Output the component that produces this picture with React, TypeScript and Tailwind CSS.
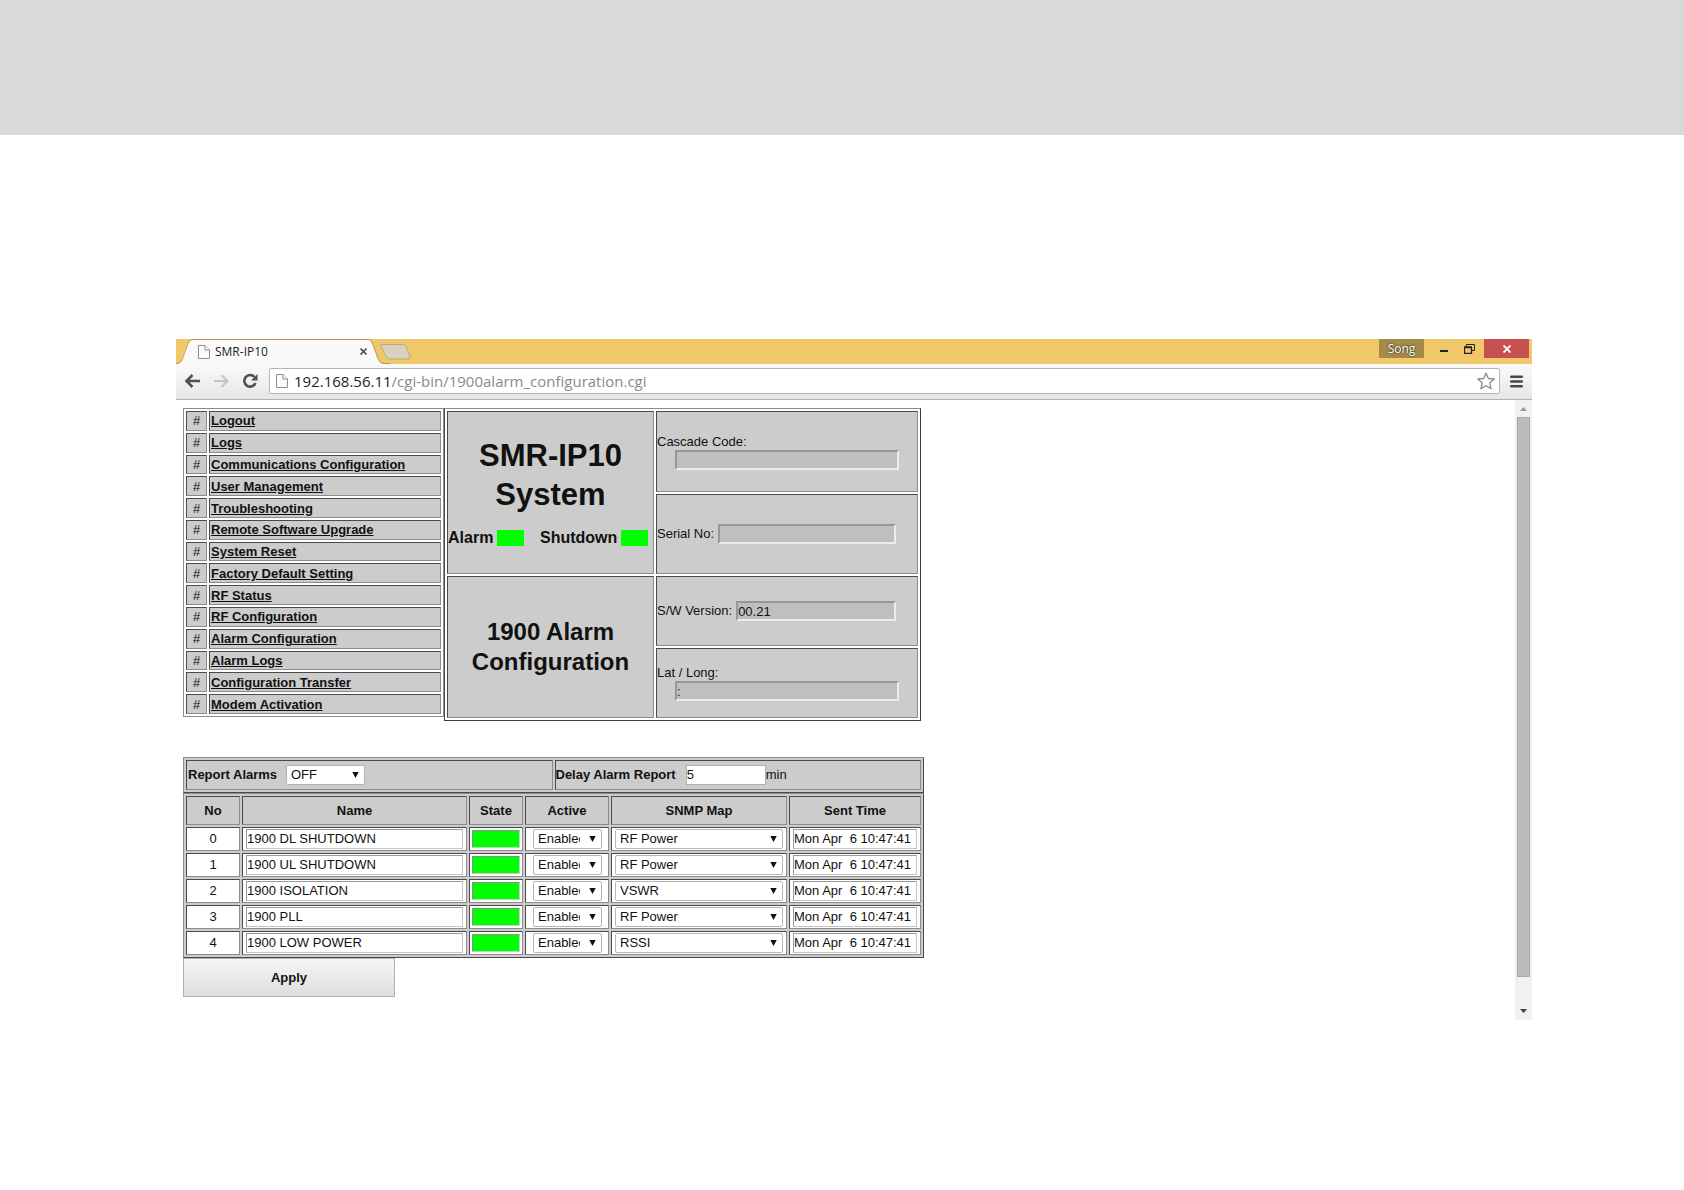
import React from "react";

const menu = [
  "Logout",
  "Logs",
  "Communications Configuration",
  "User Management",
  "Troubleshooting",
  "Remote Software Upgrade",
  "System Reset",
  "Factory Default Setting",
  "RF Status",
  "RF Configuration",
  "Alarm Configuration",
  "Alarm Logs",
  "Configuration Transfer",
  "Modem Activation",
];

const alarms = [
  { name: "1900 DL SHUTDOWN", map: "RF Power" },
  { name: "1900 UL SHUTDOWN", map: "RF Power" },
  { name: "1900 ISOLATION", map: "VSWR" },
  { name: "1900 PLL", map: "RF Power" },
  { name: "1900 LOW POWER", map: "RSSI" },
];

const snmpOptions = ["RF Power", "VSWR", "RSSI"];

const cell = "border border-t-[#4a4a4a] border-l-[#4a4a4a] border-r-[#8c8c8c] border-b-[#8c8c8c]";
const greyField =
  "h-5 border-2 border-t-[#979797] border-l-[#979797] border-r-[#ececec] border-b-[#ececec] bg-[#bfbfbf] text-[13px] leading-4 outline-none";
const whiteField =
  "block h-5 w-full border border-t-[#9a9a9a] border-l-[#9a9a9a] border-r-[#c4c4c4] border-b-[#c4c4c4] bg-white pb-0.5 text-[13px] leading-4 outline-none";

function PageIcon() {
  return (
    <svg width="12" height="14" viewBox="0 0 12 14" fill="#fbfbfb" stroke="#8f8f8f" aria-hidden="true">
      <path d="M.5.5h6.500l4.500 4.500v8.500H.5z" />
      <path d="M7 .5v4.500h4.500" />
    </svg>
  );
}

function Select({ label, value, options, size, text }: { label: string; value: string; options: string[]; size: string; text: string }) {
  return (
    <span className={`relative ${size}`}>
      <select
        aria-label={label}
        defaultValue={value}
        className={`block h-5 w-full appearance-none rounded-xs border border-[#b4b4b4] bg-white pl-1 text-[13px] leading-4 outline-none ${text}`}
      >
        {options.map((o) => (
          <option key={o}>{o}</option>
        ))}
      </select>
      <svg className="pointer-events-none absolute top-[7px] right-1.5" width="7" height="6" viewBox="0 0 7 6" aria-hidden="true">
        <path d="M.3 0h6.400L3.500 6z" fill="#111" />
      </svg>
    </span>
  );
}

function TitleBar() {
  return (
    <div className="relative flex h-[25px] items-start bg-[#f0c869]">
      <svg className="absolute top-0 left-0" width="240" height="25" viewBox="0 0 240 25" aria-hidden="true">
        <path d="M0 24.500H1q4 0 6-5L13 3q1-2.500 3-2.500H192q3 0 4 2.500l6 16.500q2 5 6 5h6" fill="none" stroke="#b79a58" />
        <path d="M1 25q4 0 6-5L13 3.500Q14.500 1 16.500 1H192q2.500 0 3.500 2.500L201.500 20q2 5 6 5z" fill="#fafafa" />
        <path d="M206 5.500h21q2 0 3 2l4 10q1 2.500-2 2.500h-18q-3 0-4-2.500l-5-10q-1-2 1-2z" fill="#d6d2bd" stroke="#b9a878" />
      </svg>
      <div className="relative flex h-[25px] w-[191px] items-center pl-[22px]">
        <PageIcon />
        <span className="ml-[5px] flex-1 font-[Open_Sans,sans-serif] text-xs text-[#222]">SMR-IP10</span>
        <button aria-label="Close tab">
          <svg width="7" height="7" viewBox="0 0 7 7" stroke="#555" strokeWidth="1.600">
            <path d="M.5.5l6 6M6.500.5l-6 6" />
          </svg>
        </button>
      </div>
      <div className="ml-auto flex h-[19px] pr-[3px]">
        <button className="h-[19px] w-[45px] bg-[#a58a4a] font-[Open_Sans,sans-serif] text-xs leading-[18px] text-white [text-shadow:0_0_2px_#000]">
          Song
        </button>
        <button aria-label="Minimize" className="flex w-10 items-center justify-center">
          <svg width="8" height="11" viewBox="0 0 8 11">
            <path d="M0 8h8" stroke="#222" strokeWidth="2" />
          </svg>
        </button>
        <button aria-label="Restore" className="flex w-5 items-center">
          <svg width="11" height="10" viewBox="0 0 11 10" fill="none" stroke="#222">
            <path d="M2.500 2V.5h8v6H8" />
            <path d="M.5 3.500h7v6h-7zM0 3h8" strokeWidth="1.300" />
          </svg>
        </button>
        <button aria-label="Close window" className="flex w-[45px] items-center justify-center bg-[#c75050]">
          <svg width="8" height="8" viewBox="0 0 8 8" stroke="#fff" strokeWidth="1.800">
            <path d="M.5.5l7 7M7.500.5l-7 7" />
          </svg>
        </button>
      </div>
    </div>
  );
}

function Toolbar() {
  return (
    <div className="flex h-9 items-start border-b border-[#b3b3b3] bg-linear-to-b from-[#fafafa] to-[#e6e6e6] pt-1 pr-[9px] pl-2">
      <div className="flex h-[26px] items-center">
        <button aria-label="Back" className="w-[29px]">
          <svg width="17" height="14" viewBox="0 0 17 14" fill="none" stroke="#505050" strokeWidth="2.600">
            <path d="M16 7H3M8.500 1L2.500 7l6 6" />
          </svg>
        </button>
        <button aria-label="Forward" className="w-[29px]">
          <svg width="17" height="14" viewBox="0 0 17 14" fill="none" stroke="#c4c4c4" strokeWidth="2">
            <path d="M1 7h13M8.500 1l6 6-6 6" />
          </svg>
        </button>
        <button aria-label="Reload" className="w-[27px]">
          <svg width="17" height="16" viewBox="0 0 17 16">
            <path d="M12.500 4A5.800 5.800 0 1 0 13.500 10" fill="none" stroke="#505050" strokeWidth="2.600" />
            <path d="M15.500 1v6.500H9z" fill="#505050" />
          </svg>
        </button>
      </div>
      <div className="flex h-[26px] flex-1 items-center rounded-xs border border-[#b5b5b5] bg-white pr-1 pl-1.5">
        <PageIcon />
        <a href="#address" className="ml-1.5 flex-1 font-[Open_Sans,sans-serif] text-[15px] leading-5 text-[#8a8a8a]">
          <span className="text-[#222]">192.168.56.11</span>/cgi-bin/1900alarm_configuration.cgi
        </a>
        <button aria-label="Bookmark">
          <svg width="18" height="18" viewBox="0 0 18 18" fill="#fff" stroke="#8c8c8c" strokeWidth="1.300" strokeLinejoin="round">
            <path d="M9 1l2.300 5.500 5.900.500-4.500 3.900 1.400 5.900L9 13.700l-5.100 3.100 1.400-5.900L.8 7l5.900-.5z" />
          </svg>
        </button>
      </div>
      <button aria-label="Menu" className="ml-2.5 flex h-[26px] items-center">
        <svg width="13" height="13" viewBox="0 0 13 13" stroke="#484848" strokeWidth="2.600" strokeLinecap="round">
          <path d="M1.300 1.800h10.400M1.300 6.500h10.400M1.300 11.200h10.400" />
        </svg>
      </button>
    </div>
  );
}

function MenuTable() {
  return (
    <table className="h-[309px] w-[261px] border-separate border-spacing-[2px] border border-[#8c8c8c] text-[13px] leading-[15px]">
      <tbody>
        {menu.map((item) => (
          <tr key={item} className="bg-[#ccc]">
            <td className={`w-[21px] text-center ${cell}`}>#</td>
            <td className={`pl-px ${cell}`}>
              <a href="#menu" className="font-bold underline">
                {item}
              </a>
            </td>
          </tr>
        ))}
      </tbody>
    </table>
  );
}

function InfoTable() {
  return (
    <table className="w-[477px] table-fixed border-separate border-spacing-[2px] border border-t-[#8c8c8c] border-l-[#4a4a4a] border-r-[#3c3c3c] border-b-[#3c3c3c] text-[13px] leading-4">
      <colgroup>
        <col className="w-[207px]" />
        <col />
      </colgroup>
      <tbody className="[&_td]:bg-[#ccc]">
        <tr className="h-[81px]">
          <td rowSpan={2} className={cell}>
            <h1 className="text-center text-[31px] leading-[39px] font-bold">
              SMR-IP10
              <br />
              System
            </h1>
            <div className="mt-3.5 flex items-center pb-0.5 text-base leading-5 font-bold">
              <span className="w-[49px]">Alarm</span>
              <span className="h-4 w-[27px] bg-[#0f0]" />
              <span className="ml-4">Shutdown</span>
              <span className="ml-1 h-4 w-[27px] bg-[#0f0]" />
            </div>
          </td>
          <td className={cell}>
            <label htmlFor="cascade" className="block">
              Cascade Code:
            </label>
            <input id="cascade" readOnly className={`ml-[18px] block w-[224px] ${greyField}`} />
          </td>
        </tr>
        <tr className="h-[80px]">
          <td className={cell}>
            <div className="flex items-center">
              <label htmlFor="serial" className="whitespace-nowrap">
                Serial No:
              </label>
              <input id="serial" readOnly className={`mr-[21px] ml-1 min-w-0 flex-1 ${greyField}`} />
            </div>
          </td>
        </tr>
        <tr className="h-[70px]">
          <td rowSpan={2} className={cell}>
            <h2 className="text-center text-2xl leading-[30px] font-bold">
              1900 Alarm
              <br />
              Configuration
            </h2>
          </td>
          <td className={cell}>
            <div className="flex items-center">
              <label htmlFor="version" className="whitespace-nowrap">
                S/W Version:
              </label>
              <input id="version" readOnly value="00.21" className={`mr-[21px] ml-1 min-w-0 flex-1 ${greyField}`} />
            </div>
          </td>
        </tr>
        <tr className="h-[70px]">
          <td className={cell}>
            <label htmlFor="latlong" className="block">
              Lat / Long:
            </label>
            <input id="latlong" readOnly value=":" className={`ml-[18px] block w-[224px] ${greyField}`} />
          </td>
        </tr>
      </tbody>
    </table>
  );
}

const outer =
  "border-separate border-spacing-[2px] border border-t-[#8c8c8c] border-l-[#8c8c8c] border-r-[#4a4a4a] border-b-[#4a4a4a] bg-[#ccc] w-[741px] table-fixed text-[13px] leading-4";

function AlarmForm() {
  return (
    <form className="mt-9">
      <table className={outer}>
        <tbody>
          <tr className="h-[30px]">
            <td className={cell}>
              <div className="flex items-center pl-px">
                <span className="w-[98px] font-bold">Report Alarms</span>
                <Select label="Report Alarms" value="OFF" options={["OFF", "ON"]} size="inline-block w-[79px]" text="pr-5" />
              </div>
            </td>
            <td className={cell}>
              <div className="flex items-center">
                <label htmlFor="delay" className="font-bold">
                  Delay Alarm Report
                </label>
                <input id="delay" defaultValue="5" className="ml-2.5 h-5 w-20 border border-[#b0b0b0] bg-white pb-0.5 text-[13px] leading-4" />
                <span>min</span>
              </div>
            </td>
          </tr>
        </tbody>
      </table>
      <table className={outer}>
        <colgroup>
          <col className="w-[54px]" />
          <col className="w-[225px]" />
          <col className="w-[54px]" />
          <col className="w-[84px]" />
          <col className="w-[176px]" />
          <col />
        </colgroup>
        <thead>
          <tr className="h-[29px]">
            {["No", "Name", "State", "Active", "SNMP Map", "Sent Time"].map((h) => (
              <th key={h} className={cell}>
                {h}
              </th>
            ))}
          </tr>
        </thead>
        <tbody>
          {alarms.map((a, i) => (
            <tr key={a.name} className="h-6 [&>td]:bg-white">
              <td className={`text-center ${cell}`}>{i}</td>
              <td className={`px-[3px] ${cell}`}>
                <input aria-label={`Name ${i}`} defaultValue={a.name} className={whiteField} />
              </td>
              <td className={`px-0.5 ${cell}`}>
                <input
                  aria-label={`State ${i}`}
                  readOnly
                  className="block h-[18px] w-full border border-t-[#8c8c8c] border-l-[#8c8c8c] border-r-[#ccc] border-b-[#ccc] bg-[#0f0]"
                />
              </td>
              <td className={`pr-1.5 pl-[7px] ${cell}`}>
                <Select label={`Active ${i}`} value="Enabled" options={["Enabled", "Disabled"]} size="block" text="pr-[21px]" />
              </td>
              <td className={`px-[3px] ${cell}`}>
                <Select label={`SNMP Map ${i}`} value={a.map} options={snmpOptions} size="block" text="pr-5" />
              </td>
              <td className={`px-[3px] ${cell}`}>
                <input aria-label={`Sent Time ${i}`} readOnly value="Mon Apr  6 10:47:41" className={whiteField} />
              </td>
            </tr>
          ))}
        </tbody>
      </table>
      <button
        type="button"
        className="block h-[39px] w-[212px] border border-[#b0b0b0] bg-linear-to-b from-[#f6f6f6] to-[#dedede] text-[13px] leading-4 font-bold"
      >
        Apply
      </button>
    </form>
  );
}

function Scrollbar() {
  return (
    <div className="flex w-[17px] flex-col items-center bg-[#f1f1f1]" aria-hidden="true">
      <div className="flex h-[17px] items-center">
        <svg width="7" height="4" viewBox="0 0 7 4">
          <path d="M0 4h7L3.500 0z" fill="#999" />
        </svg>
      </div>
      <div className="w-[13px] flex-1 border border-[#a8a8a8] bg-[#bcbcbc]" />
      <div className="flex h-[43px] items-end pb-[7px]">
        <svg width="7" height="4" viewBox="0 0 7 4">
          <path d="M0 0h7L3.500 4z" fill="#444" />
        </svg>
      </div>
    </div>
  );
}

export default function App() {
  return (
    <div className="min-h-screen bg-white font-[Liberation_Sans,Arial,sans-serif] text-[#111]">
      <header className="h-[135px] bg-[#d9d9d9]" />
      <main className="pt-[204px] pr-[152px] pb-10 pl-44">
        <TitleBar />
        <Toolbar />
        <div className="flex">
          <div className="flex-1 pt-2 pb-[23px] pl-[7px]">
            <div className="flex items-start">
              <MenuTable />
              <InfoTable />
            </div>
            <AlarmForm />
          </div>
          <Scrollbar />
        </div>
      </main>
    </div>
  );
}
